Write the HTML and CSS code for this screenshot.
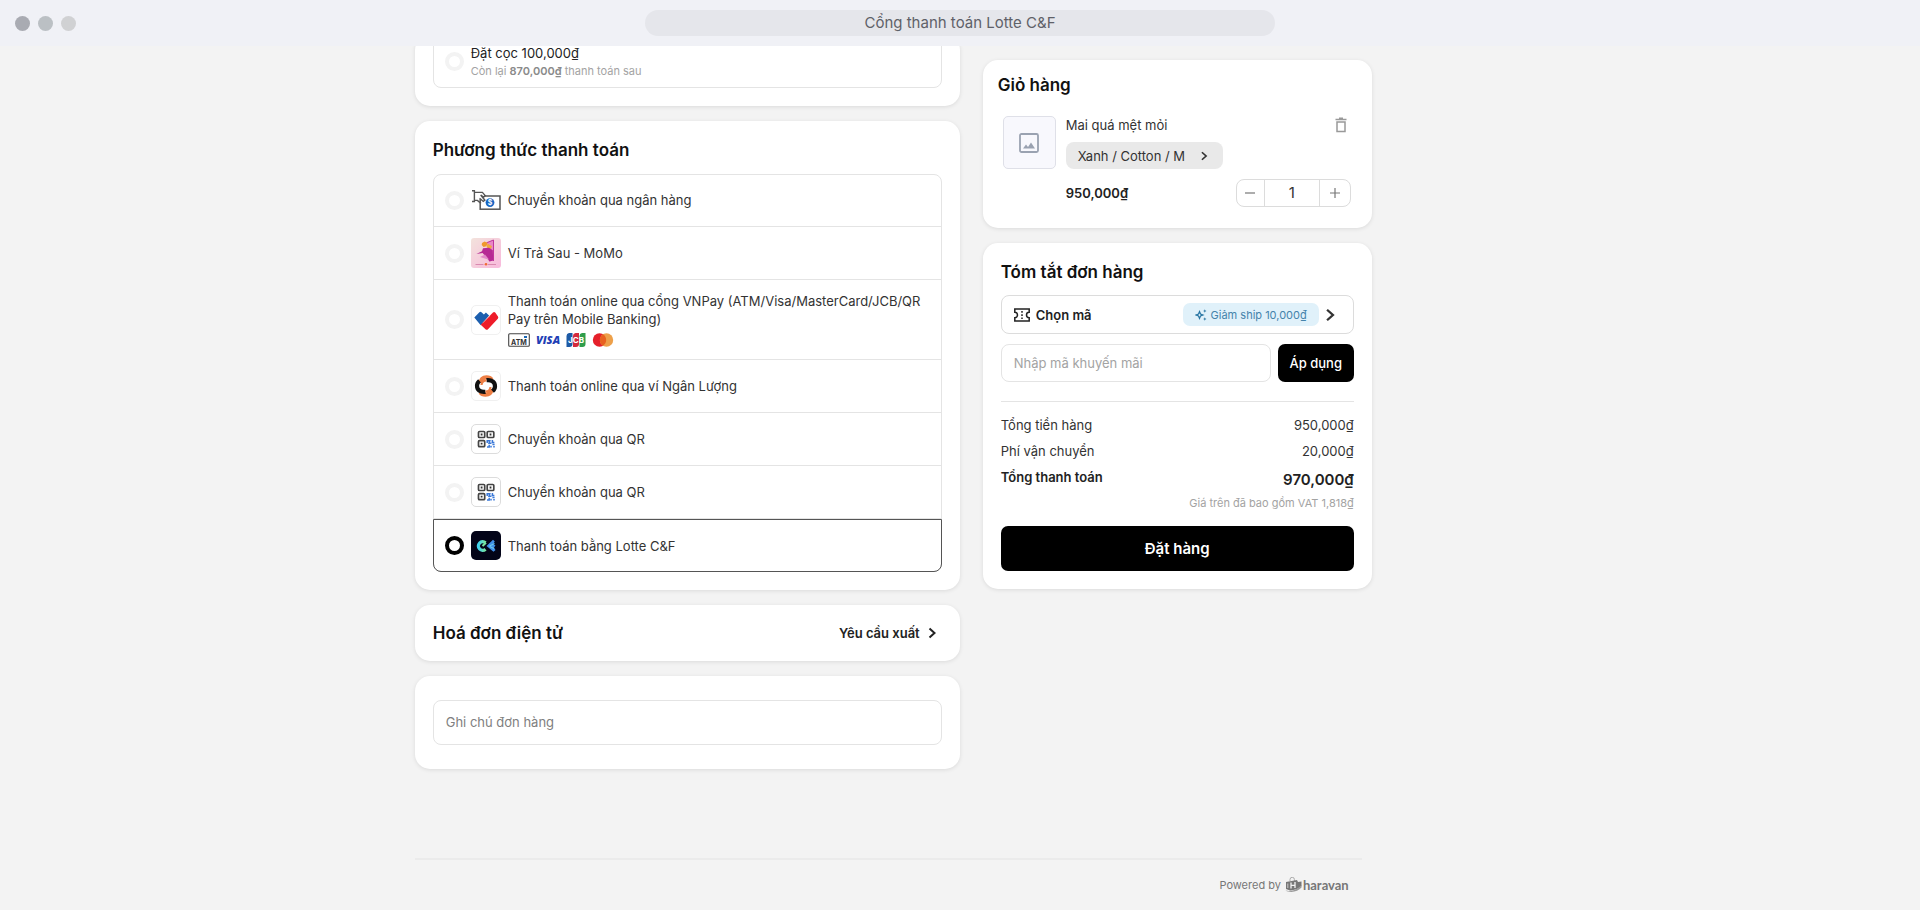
FILE: index.html
```html
<!DOCTYPE html>
<html lang="vi">
<head>
    <meta charset="UTF-8">
    <meta name="viewport" content="width=device-width, initial-scale=1.0">
    <title>Cổng thanh toán Lotte C&amp;F</title>
    <link rel="stylesheet" href="styles.css">
</head>
<body>
    <header class="topbar">
        <div class="dots"><span></span><span></span><span></span></div>
        <div class="address">Cổng thanh toán Lotte C&amp;F</div>
        <div></div>
    </header>

    <!-- Shared icon shapes -->
    <svg class="defs" aria-hidden="true">
        <symbol id="chevron" viewBox="0 0 12 12">
            <path d="M3.5 1.5 8.500 6l-5 4.500" fill="none" stroke="currentColor" stroke-width="2"/>
        </symbol>
        <symbol id="qr" viewBox="1 1 28 28">
            <g fill="none" stroke="#444" stroke-width="1.700">
                <rect x="7.500" y="7.500" width="6.200" height="6" rx="1"/>
                <rect x="16.200" y="7.500" width="6.600" height="6" rx="1"/>
                <rect x="7.500" y="16.700" width="6.200" height="6" rx="1"/>
            </g>
            <path d="M9.700 9.600h1.800v1.800H9.700zM18.600 9.600h1.800v1.800h-1.800zM9.700 18.800h1.800v1.800H9.700z" fill="#333"/>
            <path d="M16.200 19v-2.300h2.600l-.8 2.600h2.400M21.400 16v2.500h2M16 22.900h2.200v-2.200M20 23.500v-1.800M21.400 20.600h2.200M23 22v1.600" fill="none" stroke="#3a78d8" stroke-width="1.500"/>
        </symbol>
    </svg>

    <main class="page">
        <div class="checkout">
            <form class="column" id="checkoutForm">
                <section class="card card-deposit">
                    <div class="options">
                        <label class="option">
                            <input type="radio" name="deposit">
                            <span class="option-text">
                                <span class="deposit-title">Đặt cọc 100,000₫</span>
                                <small>Còn lại <b>870,000₫</b> thanh toán sau</small>
                            </span>
                        </label>
                    </div>
                </section>

                <section class="card card-methods">
                    <h2>Phương thức thanh toán</h2>
                    <div class="options">
                        <label class="option">
                            <input type="radio" name="method">
                            <svg class="method-icon" viewBox="0 0 30 30">
                                <rect x="9.200" y="11" width="19.800" height="13.200" fill="#fff" stroke="#555" stroke-width="1.500"/>
                                <path d="M1 5.700h2.400v10.800H1M3.400 7.300l8 .1 2.800 3.200-1.500 1.400-3-2 4.200 5.200-1.600 1.200-3.400-3M3.400 15.400h3l3.600 3" fill="#fff" stroke="#555" stroke-width="1.400"/>
                                <circle cx="19" cy="17.600" r="4.400" fill="#1967c4"/>
                                <text x="19" y="20" class="coin-text">$</text>
                            </svg>
                            <span class="option-text">Chuyển khoản qua ngân hàng</span>
                        </label>
                        <label class="option">
                            <input type="radio" name="method">
                            <svg class="method-icon" viewBox="0 0 30 30">
                                <defs>
                                    <linearGradient id="momoBg" x1="0" y1="0" x2="1" y2="1">
                                        <stop offset="0" stop-color="#f3e3dc"/>
                                        <stop offset="1" stop-color="#f8b9dc"/>
                                    </linearGradient>
                                </defs>
                                <rect width="30" height="30" rx="3" fill="url(#momoBg)"/>
                                <path d="M16 4.500 22.500 2v20L18 23.500z" fill="#e987c6"/>
                                <path d="M22.500 2v21M15.500 4.800l7-2.800" fill="none" stroke="#c0359c" stroke-width="1"/>
                                <path d="M11 5l2.500-1.400 3 1.200-1 3.400-3 .8-1.800-2z" fill="#f0982c"/>
                                <path d="M16.500 5.500l4.500 2.800-1.500 3-4-2z" fill="#f2a93b"/>
                                <path d="M12 10.200l6-.4 3.800 2.400.4 10.300-3.600 1-4.200-5.200-2.800-3.200-6.200.8 5.600-2.600z" fill="#b62a94"/>
                                <path d="M9 19l5-2.500 4 5-5-1.200z" fill="#e38ac8"/>
                                <path d="M4.500 26.500h8M17 26.500h8" stroke="#d98ab0" stroke-width="1"/>
                                <circle cx="15" cy="26.300" r="1.300" fill="#ef6b35"/>
                            </svg>
                            <span class="option-text">Ví Trả Sau - MoMo</span>
                        </label>
                        <label class="option option-tall">
                            <input type="radio" name="method">
                            <svg class="method-icon framed" viewBox="1 1 28 28">
                                <path d="M3.300 12.500 8.400 7.200a1.500 1.500 0 0 1 2.100 0l2.400 2.200 2-1.800 3.200 3-8.400 9.600z" fill="#1d5fae"/>
                                <path d="M9.700 19.800 20 9.600l2-2.200a1.600 1.600 0 0 1 2.200 0l2.800 4.200a1.800 1.800 0 0 1-.2 2.200L17 24.200a1.800 1.800 0 0 1-2.500 0z" fill="#ee1c2a"/>
                                <path d="M12 17.800l7-7" stroke="#f58a8f" stroke-width=".8"/>
                            </svg>
                            <span class="option-text">
                                Thanh toán online qua cổng VNPay (ATM/Visa/MasterCard/JCB/QR Pay trên Mobile Banking)
                                <span class="brands">
                                    <svg width="22" height="16" viewBox="0 0 22 16">
                                        <rect x=".7" y="1.700" width="20.600" height="12.600" rx="1" fill="#fff" stroke="#444" stroke-width="1.100"/>
                                        <path d="M16 4h3v2h-3z" fill="#1967b5"/>
                                        <text x="11" y="12.500" class="atm-text">ATM</text>
                                    </svg>
                                    <svg width="24" height="16" viewBox="0 0 24 16">
                                        <text x="12" y="12" class="visa-text">VISA</text>
                                    </svg>
                                    <svg width="20" height="16" viewBox="0 0 20 16">
                                        <path d="M3 1h3.500v11a3 3 0 0 1-3 3H.5V4A3 3 0 0 1 3 1z" fill="#1d5aa6"/>
                                        <path d="M9.500 1H13v11a3 3 0 0 1-3 3H7V4a3 3 0 0 1 2.500-3z" fill="#d42a3c"/>
                                        <path d="M16 1h3.500v11a3 3 0 0 1-3 3h-3V4A3 3 0 0 1 16 1z" fill="#2f9e4b"/>
                                        <text x="10" y="10.800" class="jcb-text">JCB</text>
                                    </svg>
                                    <svg width="22" height="16" viewBox="0 0 22 16">
                                        <circle cx="7.500" cy="8" r="6.700" fill="#e5202b"/>
                                        <circle cx="14.500" cy="8" r="6.700" fill="#eda04a"/>
                                        <path d="M11 2.300a6.700 6.700 0 0 1 0 11.400 6.700 6.700 0 0 1 0-11.400z" fill="#e8611f"/>
                                    </svg>
                                </span>
                            </span>
                        </label>
                        <label class="option">
                            <input type="radio" name="method">
                            <svg class="method-icon framed" viewBox="1 1 28 28">
                                <path d="M9.500 12C10 8 12.500 6.400 15.500 6.400c2.500 0 4 .8 5 2.300" fill="none" stroke="#ee7f45" stroke-width="4.400"/>
                                <path d="M20.500 18c-.5 4-3 5.600-6 5.600-2.500 0-4-.8-5-2.300" fill="none" stroke="#ee7f45" stroke-width="4.400"/>
                                <path d="M15.500 9.200c5.500-.6 8.500 2 8.500 6 0 2-.8 3.600-2.500 5" fill="none" stroke="#111" stroke-width="4.200"/>
                                <path d="M14.500 20.800c-5.500.6-8.500-2-8.500-6 0-2 .8-3.600 2.500-5" fill="none" stroke="#111" stroke-width="4.200"/>
                                <path d="M10.500 14c.3-3 2.500-4.500 5-4.500M19.500 16c-.3 3-2.500 4.500-5 4.500" fill="none" stroke="#ee7f45" stroke-width="2.200"/>
                            </svg>
                            <span class="option-text">Thanh toán online qua ví Ngân Lượng</span>
                        </label>
                        <label class="option">
                            <input type="radio" name="method">
                            <svg class="method-icon framed framed-dark"><use href="#qr"/></svg>
                            <span class="option-text">Chuyển khoản qua QR</span>
                        </label>
                        <label class="option">
                            <input type="radio" name="method">
                            <svg class="method-icon framed framed-dark"><use href="#qr"/></svg>
                            <span class="option-text">Chuyển khoản qua QR</span>
                        </label>
                        <label class="option">
                            <input type="radio" name="method" checked>
                            <svg class="method-icon" viewBox="0 0 30 30">
                                <defs>
                                    <linearGradient id="lotteC">
                                        <stop offset="0" stop-color="#3fd0ee"/>
                                        <stop offset="1" stop-color="#7be7a0"/>
                                    </linearGradient>
                                </defs>
                                <rect width="30" height="29" rx="5" fill="#030418"/>
                                <path d="M14.500 11.800a4.300 4.300 0 1 0 0 6.400" fill="none" stroke="url(#lotteC)" stroke-width="3.200"/>
                                <path d="M11.500 15l3.500-3.300" stroke="#7be7a0" stroke-width="2"/>
                                <path d="M15.500 15 22 8.800l1.800 1.700-1.500 2.500 2.200 1.500-1.500 2 1.500 2.500-2 1.800z" fill="#3f8fe8"/>
                                <path d="M18.500 15l5-2.500M18.500 15.500l4.500 2" stroke="#6cc8ee" stroke-width="1.200"/>
                            </svg>
                            <span class="option-text">Thanh toán bằng Lotte C&amp;F</span>
                        </label>
                    </div>
                </section>

                <section class="card card-invoice">
                    <h2>Hoá đơn điện tử</h2>
                    <button type="button" class="link-button">Yêu cầu xuất <svg width="12" height="12"><use href="#chevron"/></svg></button>
                </section>

                <section class="card card-note">
                    <textarea name="note" rows="1" placeholder="Ghi chú đơn hàng" aria-label="Ghi chú đơn hàng"></textarea>
                </section>
            </form>

            <aside class="column side">
                <section class="card card-cart">
                    <h2>Giỏ hàng</h2>
                    <div class="cart-item">
                        <div class="thumb">
                            <svg width="20" height="20" viewBox="0 0 20 20">
                                <rect x="1" y="1" width="18" height="18" rx="1.500" fill="none" stroke="#9aa2b1" stroke-width="1.800"/>
                                <path d="M4 15.500 7 11.500l2 2.500 3-4.500 4 6z" fill="#9aa2b1"/>
                            </svg>
                        </div>
                        <div class="item-info">
                            <div class="item-line">
                                <span>Mai quá mệt mỏi</span>
                                <button type="button" class="remove" aria-label="Xoá">
                                    <svg width="12" height="16" viewBox="0 0 12 16">
                                        <path d="M.5 2.500h11M4 1.300h4M2 5h8v9.500H2z" fill="none" stroke="#999" stroke-width="1.500"/>
                                    </svg>
                                </button>
                            </div>
                            <button type="button" class="variant">Xanh / Cotton / M <svg width="10" height="10"><use href="#chevron"/></svg></button>
                            <div class="item-line">
                                <b>950,000₫</b>
                                <div class="stepper">
                                    <button type="button" aria-label="Giảm">
                                        <svg width="10" height="10" viewBox="0 0 10 10"><path d="M0 5h10" stroke="#777" stroke-width="1.200"/></svg>
                                    </button>
                                    <input type="text" value="1" aria-label="Số lượng">
                                    <button type="button" aria-label="Tăng">
                                        <svg width="10" height="10" viewBox="0 0 10 10"><path d="M0 5h10M5 0v10" stroke="#777" stroke-width="1.200"/></svg>
                                    </button>
                                </div>
                            </div>
                        </div>
                    </div>
                </section>

                <section class="card card-summary">
                    <h2>Tóm tắt đơn hàng</h2>
                    <button type="button" class="voucher">
                        <svg width="16" height="14" viewBox="0 0 16 14">
                            <path d="M.8 1h14.400v3.300a2.700 2.700 0 0 0 0 5.400V13H.8V9.700a2.700 2.700 0 0 0 0-5.400z" fill="none" stroke="#222" stroke-width="1.500"/>
                            <path d="M8 3v1.700M8 6.200v1.700M8 9.400v1.700" stroke="#222" stroke-width="1.500"/>
                        </svg>
                        <span class="voucher-label">Chọn mã</span>
                        <span class="voucher-tag">
                            <svg width="12" height="12" viewBox="0 0 12 12">
                                <path d="M4.500 2.500l1 2.500 2.500 1-2.500 1-1 2.500-1-2.500L1 6l2.500-1z" fill="none" stroke="#2675a3" stroke-width="1.200"/>
                                <path d="M9.800.3l.5 1.200 1.200.5-1.200.5-.5 1.200-.5-1.200L8.100 2l1.200-.5zM9.800 8.300l.5 1.200 1.200.5-1.200.5-.5 1.200-.5-1.200-1.200-.5 1.200-.5z" fill="#2675a3"/>
                            </svg>
                            Giảm ship 10,000₫
                        </span>
                        <svg width="14" height="14"><use href="#chevron"/></svg>
                    </button>
                    <div class="coupon">
                        <input type="text" placeholder="Nhập mã khuyến mãi" aria-label="Nhập mã khuyến mãi">
                        <button type="button">Áp dụng</button>
                    </div>
                    <dl class="totals">
                        <div><dt>Tổng tiền hàng</dt><dd>950,000₫</dd></div>
                        <div><dt>Phí vận chuyển</dt><dd>20,000₫</dd></div>
                        <div class="grand"><dt>Tổng thanh toán</dt><dd>970,000₫</dd></div>
                    </dl>
                    <p class="vat">Giá trên đã bao gồm VAT 1,818₫</p>
                    <button type="submit" form="checkoutForm" class="place-order">Đặt hàng</button>
                </section>
            </aside>
        </div>

        <footer class="footer">
            <span>Powered by</span>
            <svg width="17" height="16" viewBox="0 0 17 16">
                <path d="M5 4V2.500a2.200 2.200 0 0 1 4.400 0V4" fill="none" stroke="#aaa" stroke-width="1"/>
                <path d="M1 5l11-2 1 2 3.500-.5V9c-3 3-7 4-11.500 4.500L1 12z" fill="#777"/>
                <path d="M.5 13.500C7 15 13 12 16.500 8v2.500C13 14.500 6 16.500.5 13.500z" fill="#999"/>
                <path d="M6 5.500v6M10 5v6M6 8.300h4" stroke="#f3f3f3" stroke-width="1.300"/>
                <path d="M2.800 6.500v4.500" stroke="#ccc" stroke-width="1"/>
            </svg>
            <span class="brand">haravan</span>
        </footer>
    </main>
</body>
</html>
```
FILE: styles.css
```css
:root {
    --text-color: #333;
    --heading-color: #111;
    --muted-color: #a3a3a3;
    --border-color: #e4e4e4;
    --background-color: #f3f3f3;
    --box-shadow: 0 1px 4px rgba(0, 0, 0, 0.1);
}

* {
    box-sizing: border-box;
    margin: 0;
    padding: 0;
}

body {
    font-family: Inter, "Liberation Sans", sans-serif;
    font-size: 13px;
    line-height: 18px;
    color: var(--text-color);
    background-color: var(--background-color);
}

button, input, textarea {
    font: inherit;
    color: inherit;
}

button {
    display: flex;
    align-items: center;
    justify-content: center;
    border: none;
    background: none;
    cursor: pointer;
}

svg {
    flex-shrink: 0;
}

.defs {
    display: none;
}

/* Window bar */
.topbar {
    position: relative;
    z-index: 1;
    display: grid;
    grid-template-columns: 1fr minmax(auto, 630px) 1fr;
    align-items: center;
    height: 46px;
    padding: 0 15px;
    background-color: #f0f1f6;
}

.dots {
    display: flex;
    gap: 8px;
}

.dots span {
    width: 15px;
    height: 15px;
    border-radius: 50%;
    background-color: #a9abb2;
}

.dots span:nth-child(2) {
    background-color: #bbc0c4;
}

.dots span:nth-child(3) {
    background-color: #d0d1d3;
}

.address {
    height: 26px;
    border-radius: 13px;
    background-color: #e5e6eb;
    color: #5f6168;
    font-size: 15px;
    line-height: 25px;
    text-align: center;
}

/* Layout */
.page {
    max-width: 957px;
    margin-left: 21.6vw;
}

.checkout {
    display: grid;
    grid-template-columns: 545fr 389fr;
    gap: 23px;
    align-items: start;
}

.column {
    display: flex;
    flex-direction: column;
    gap: 15px;
}

.side {
    padding-top: 14px;
}

.card {
    padding: 18px;
    border-radius: 15px;
    background-color: white;
    box-shadow: var(--box-shadow);
}

h2 {
    color: var(--heading-color);
    font-size: 17px;
    line-height: 22px;
    font-weight: 600;
}

/* The deposit card is scrolled under the window bar */
.card-deposit {
    margin-top: -11px;
    padding-top: 0;
}

.card-deposit .options {
    border-radius: 0 0 8px 8px;
}

.card-methods h2 {
    margin-bottom: 13px;
}

/* Payment options */
.options {
    border: 1px solid var(--border-color);
    border-radius: 8px;
}

.option {
    display: flex;
    align-items: center;
    gap: 7px;
    min-height: 53px;
    margin: 0 -1px;
    padding: 0 12px;
    border-bottom: 1px solid var(--border-color);
}

.option:first-child {
    margin-top: -1px;
}

.option:last-child {
    margin-bottom: -1px;
    border-bottom: none;
}

.option-tall {
    min-height: 80px;
}

.option:has(:checked) {
    border: 1px solid #555;
    border-radius: 0 0 8px 8px;
    padding: 0 11px;
}

.option input {
    flex-shrink: 0;
    width: 19px;
    height: 19px;
    appearance: none;
    border: 4px solid #f3f3f3;
    border-radius: 50%;
}

.option input:checked {
    border-color: #000;
}

.option small {
    display: block;
    color: var(--muted-color);
    font-size: 11px;
    line-height: 18px;
}

.option small b {
    color: #8a8a8a;
    font-weight: 600;
}

.deposit-title {
    color: #222;
}

.method-icon {
    width: 30px;
    height: 30px;
}

.framed {
    border: 1px solid #f0f0f0;
    border-radius: 5px;
}

.framed-dark {
    border-color: #dcdcdc;
}

.brands {
    display: flex;
    gap: 6px;
    margin-top: 4px;
}

.coin-text {
    fill: white;
    font-size: 7px;
    font-weight: 700;
    text-anchor: middle;
}

.atm-text {
    fill: #333;
    font-size: 7px;
    font-weight: 700;
    text-anchor: middle;
}

.visa-text {
    fill: #1f3fb5;
    font-family: "Open Sans", sans-serif;
    font-size: 11px;
    font-weight: 800;
    font-style: italic;
    text-anchor: middle;
}

.jcb-text {
    fill: white;
    font-size: 8px;
    font-weight: 700;
    text-anchor: middle;
}

/* Invoice and note */
.card-invoice {
    display: flex;
    align-items: center;
    justify-content: space-between;
    min-height: 56px;
    padding: 0 18px;
}

.link-button {
    gap: 6px;
    padding-right: 4px;
    color: #222;
    font-weight: 600;
}

.card-note {
    display: flex;
    padding: 24px 18px;
}

.card-note textarea {
    flex: 1;
    height: 45px;
    padding: 12px;
    border: 1px solid var(--border-color);
    border-radius: 8px;
    resize: none;
}

.card-note textarea::placeholder {
    color: #808080;
}

/* Cart */
.card-cart {
    padding: 14px 21px 21px 15px;
}

.cart-item {
    display: flex;
    gap: 10px;
    margin-top: 20px;
    padding-left: 5px;
}

.thumb {
    display: flex;
    align-items: center;
    justify-content: center;
    width: 53px;
    height: 53px;
    border: 1px solid #dfe0e8;
    border-radius: 5px;
    background-color: #f8f8fd;
}

.item-info {
    flex: 1;
}

.item-line {
    display: flex;
    align-items: center;
    justify-content: space-between;
}

.item-line b {
    color: #222;
    font-weight: 600;
}

.remove {
    width: 20px;
    height: 18px;
}

.variant {
    gap: 14px;
    height: 27px;
    margin: 8px 0 10px;
    padding: 0 14px 0 12px;
    border-radius: 8px;
    background-color: #e9e9e9;
}

.stepper {
    display: flex;
    width: 115px;
    height: 28px;
    border: 1px solid #dcdcdc;
    border-radius: 8px;
}

.stepper button {
    width: 27px;
}

.stepper button:last-child {
    width: 30px;
}

.stepper input {
    flex: 1;
    min-width: 0;
    border: solid #dcdcdc;
    border-width: 0 1px;
    font-size: 15px;
    text-align: center;
}

/* Summary */
.card-summary h2 {
    margin-bottom: 12px;
}

.voucher {
    width: 100%;
    height: 39px;
    padding: 0 16px 0 12px;
    border: 1px solid #dcdcdc;
    border-radius: 8px;
}

.voucher-label {
    margin-left: 6px;
    margin-right: auto;
    color: #222;
    font-weight: 600;
}

.voucher-tag {
    display: flex;
    align-items: center;
    gap: 4px;
    height: 23px;
    margin-right: 4px;
    padding: 0 12px;
    border-radius: 7px;
    background-color: #e0f1fa;
    color: #4583ab;
    font-size: 11px;
}

.coupon {
    display: flex;
    gap: 7px;
    height: 38px;
    margin: 10px 0 19px;
}

.coupon input {
    flex: 1;
    min-width: 0;
    padding: 0 12px;
    border: 1px solid var(--border-color);
    border-radius: 8px;
}

.coupon input::placeholder {
    color: var(--muted-color);
}

.coupon button {
    width: 76px;
    border-radius: 7px;
    background-color: #000;
    color: white;
    font-weight: 500;
}

.totals {
    padding-top: 14px;
    border-top: 1px solid var(--border-color);
}

.totals div {
    display: flex;
    justify-content: space-between;
    margin-bottom: 7px;
    line-height: 19px;
}

.totals .grand {
    margin-bottom: 0;
    color: #222;
    font-weight: 600;
}

.grand dd {
    font-size: 15px;
    line-height: 24px;
}

.vat {
    color: var(--muted-color);
    font-size: 11px;
    line-height: 22px;
    text-align: right;
}

.place-order {
    width: 100%;
    height: 45px;
    margin-top: 12px;
    border-radius: 7px;
    background-color: #000;
    color: white;
    font-size: 15px;
    font-weight: 600;
}

/* Footer */
.footer {
    display: flex;
    align-items: center;
    justify-content: flex-end;
    gap: 4px;
    margin: 89px 10px 0 0;
    padding: 16px 13px 0 0;
    border-top: 2px solid #ebebeb;
    color: #777;
    font-size: 11px;
}

.footer .brand {
    margin-left: -3px;
    font-family: Lato, sans-serif;
    font-size: 13px;
    font-weight: 700;
}

@media (max-width: 1200px) {
    .page {
        margin: 0 auto;
    }
}

@media (max-width: 760px) {
    .checkout {
        grid-template-columns: 1fr;
    }
}
```
